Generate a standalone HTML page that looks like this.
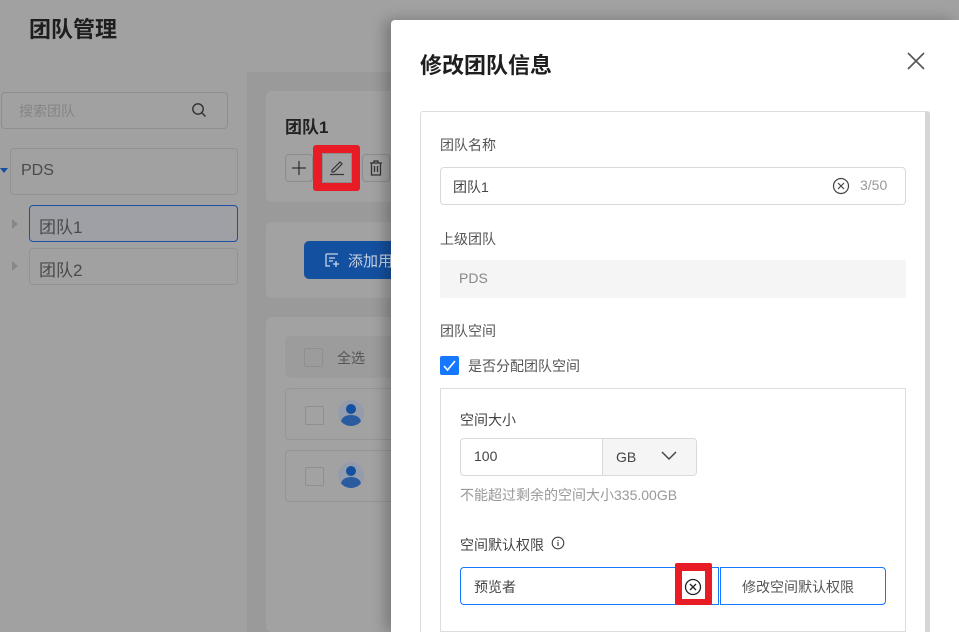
<!DOCTYPE html>
<html><head><meta charset="utf-8"><style>
*{margin:0;padding:0;box-sizing:border-box}
html,body{width:959px;height:632px;overflow:hidden}
body{position:relative;background:#a1a1a1;font-family:"Liberation Sans","Noto Sans CJK SC",sans-serif;color:#333}
.a{position:absolute}
.bx{position:absolute;border:1px solid #8f8f8f;border-radius:4px}
.t{position:absolute;font-size:14px;color:#4a4a4a;white-space:nowrap}
</style></head><body>
<div class="t" style="left:29px;top:12px;font-size:22px;font-weight:bold;color:#1e1e1e">团队管理</div>
<div class="bx" style="left:1px;top:92px;width:227px;height:37px;border-color:#8e8e8e"></div>
<div class="t" style="left:19px;top:101px;color:#858585">搜索团队</div>
<svg class="a" style="left:191px;top:102px" width="16" height="16" viewBox="0 0 16 16"><circle cx="7" cy="7" r="5.2" fill="none" stroke="#333" stroke-width="1.4"/><path d="M11 11l3.5 3.5" stroke="#333" stroke-width="1.4"/></svg>
<div class="a" style="left:0;top:168px;width:0;height:0;border-left:4px solid transparent;border-right:4px solid transparent;border-top:5px solid #1450a0"></div>
<div class="bx" style="left:10px;top:148px;width:228px;height:47px;border-color:#939393"></div>
<div class="t" style="left:21px;top:162px;font-size:16px">PDS</div>
<div class="bx" style="left:29px;top:205px;width:209px;height:37px;border-color:#2050a0;background:#9ea0a6"></div>
<div class="t" style="left:39px;top:213px;font-size:17px">团队1</div>
<div class="bx" style="left:29px;top:248px;width:209px;height:37px;border-color:#939393"></div>
<div class="t" style="left:39px;top:256px;font-size:17px">团队2</div>
<div class="a" style="left:12px;top:219px;border-top:5px solid transparent;border-bottom:5px solid transparent;border-left:6px solid #888"></div>
<div class="a" style="left:12px;top:261px;border-top:5px solid transparent;border-bottom:5px solid transparent;border-left:6px solid #888"></div>
<div class="a" style="left:247px;top:72px;width:150px;height:560px;background:#9a9a9a"></div>
<div class="a" style="left:266px;top:91px;width:130px;height:111px;background:#a2a2a2;border-radius:6px"></div>
<div class="t" style="left:285px;top:113px;font-size:17px;font-weight:bold;color:#222">团队1</div>
<div class="bx" style="left:285px;top:154px;width:28px;height:28px;border-color:#8c8c8c"></div>
<svg class="a" style="left:291px;top:160px" width="16" height="16" viewBox="0 0 16 16"><path d="M8 1v14M1 8h14" stroke="#333" stroke-width="1.3"/></svg>
<div class="a" style="left:313px;top:145px;width:47px;height:46px;background:#e81c24;border-radius:3px"></div>
<div class="a" style="left:322px;top:153px;width:30px;height:30px;background:#a2a2a2;border:1px solid #8c8c8c"></div>
<svg class="a" style="left:328px;top:158px" width="18" height="18" viewBox="0 0 18 18"><path d="M4 12l8-8 2 2-8 8H4z" fill="none" stroke="#333" stroke-width="1.2"/><path d="M2 16.5h14" stroke="#333" stroke-width="1.2"/></svg>
<div class="bx" style="left:362px;top:154px;width:28px;height:28px;border-color:#8c8c8c"></div>
<svg class="a" style="left:367px;top:158px" width="18" height="20" viewBox="0 0 18 20"><path d="M3 5h12M7 5V3h4v2M4.5 5v12h9V5M7.5 8v6M10.5 8v6" fill="none" stroke="#333" stroke-width="1.3"/></svg>
<div class="a" style="left:266px;top:222px;width:130px;height:76px;background:#a2a2a2;border-radius:6px"></div>
<div class="a" style="left:304px;top:241px;width:92px;height:38px;background:#1450a0;border-radius:5px 0 0 5px"></div>
<svg class="a" style="left:325px;top:252px" width="16" height="16" viewBox="0 0 16 16"><path d="M1 2h12M1 2v12h4M4 6h6M4 9h4M1 14h4M11 9v6M8 12h6" fill="none" stroke="#c8d3e4" stroke-width="1.3"/></svg>
<div class="t" style="left:348px;top:250px;color:#c8d3e4;font-size:15px">添加用</div>
<div class="a" style="left:266px;top:317px;width:130px;height:315px;background:#a2a2a2;border-radius:6px"></div>
<div class="a" style="left:285px;top:336px;width:111px;height:42px;background:#9c9c9c;border-radius:5px"></div>
<div class="bx" style="left:304px;top:348px;width:19px;height:19px;border-radius:2px"></div>
<div class="t" style="left:337px;top:348px;color:#555">全选</div>
<div class="bx" style="left:285px;top:388px;width:111px;height:52px;border-color:#959595"></div>
<div class="bx" style="left:305px;top:406px;width:19px;height:19px;border-radius:2px"></div>
<div class="a" style="left:338px;top:400px;width:26px;height:26px;border-radius:50%;background:#959cab;overflow:hidden"><div class="a" style="left:8px;top:4px;width:10px;height:10px;border-radius:50%;background:#1450a0"></div><div class="a" style="left:3px;top:15px;width:20px;height:14px;border-radius:50% 50% 0 0;background:#2a5aa0"></div></div>
<div class="bx" style="left:285px;top:450px;width:111px;height:52px;border-color:#959595"></div>
<div class="bx" style="left:305px;top:467px;width:19px;height:19px;border-radius:2px"></div>
<div class="a" style="left:338px;top:462px;width:26px;height:26px;border-radius:50%;background:#959cab;overflow:hidden"><div class="a" style="left:8px;top:4px;width:10px;height:10px;border-radius:50%;background:#1450a0"></div><div class="a" style="left:3px;top:15px;width:20px;height:14px;border-radius:50% 50% 0 0;background:#2a5aa0"></div></div>

<div class="a" style="left:391px;top:20px;width:568px;height:612px;background:#fff;border-radius:4px 0 0 0;box-shadow:-6px 0 14px rgba(0,0,0,.25)"></div>
<div class="t" style="left:420px;top:48px;font-size:22px;font-weight:bold;color:#1e1e1e">修改团队信息</div>
<svg class="a" style="left:907px;top:52px" width="18" height="18" viewBox="0 0 18 18"><path d="M1 1l16 16M17 1L1 17" stroke="#555" stroke-width="1.6"/></svg>
<div class="a" style="left:420px;top:111px;width:510px;height:530px;border:1px solid #ddd;border-right:5px solid #d6d6d6;border-radius:3px"></div>
<div class="t" style="left:440px;top:135px;color:#555">团队名称</div>
<div class="a" style="left:440px;top:167px;width:466px;height:38px;border:1px solid #d9d9d9;border-radius:4px"></div>
<div class="t" style="left:453px;top:177px;color:#444">团队1</div>
<svg class="a" style="left:832px;top:177px" width="18" height="18" viewBox="0 0 18 18"><circle cx="9" cy="9" r="7.5" fill="none" stroke="#444" stroke-width="1.2"/><path d="M6 6l6 6M12 6l-6 6" stroke="#444" stroke-width="1.2"/></svg>
<div class="t" style="left:860px;top:177px;color:#999">3/50</div>
<div class="t" style="left:440px;top:229px;color:#555">上级团队</div>
<div class="a" style="left:440px;top:260px;width:466px;height:38px;background:#f5f5f5;border-radius:2px"></div>
<div class="t" style="left:459px;top:270px;color:#888">PDS</div>
<div class="t" style="left:440px;top:321px;color:#555">团队空间</div>
<div class="a" style="left:440px;top:356px;width:19px;height:19px;background:#1677ff;border-radius:2px"></div>
<svg class="a" style="left:442px;top:358px" width="15" height="15" viewBox="0 0 15 15"><path d="M2 8l3.5 4L13 3" fill="none" stroke="#fff" stroke-width="1.6"/></svg>
<div class="t" style="left:468px;top:356px;color:#555">是否分配团队空间</div>
<div class="a" style="left:440px;top:388px;width:466px;height:244px;border:1px solid #ddd"></div>
<div class="t" style="left:460px;top:410px;color:#444">空间大小</div>
<div class="a" style="left:460px;top:438px;width:237px;height:38px;border:1px solid #d9d9d9;border-radius:4px"></div>
<div class="a" style="left:602px;top:439px;width:94px;height:36px;background:#f5f5f5;border-left:1px solid #d9d9d9;border-radius:0 4px 4px 0"></div>
<div class="t" style="left:474px;top:448px;color:#444">100</div>
<div class="t" style="left:616px;top:449px;color:#444">GB</div>
<svg class="a" style="left:660px;top:450px" width="18" height="12" viewBox="0 0 18 12"><path d="M2 2l7 7 7-7" fill="none" stroke="#444" stroke-width="1.5"/></svg>
<div class="t" style="left:460px;top:485px;color:#999">不能超过剩余的空间大小335.00GB</div>
<div class="t" style="left:460px;top:535px;color:#444">空间默认权限</div>
<svg class="a" style="left:551px;top:536px" width="14" height="14" viewBox="0 0 14 14"><circle cx="7" cy="7" r="5.8" fill="none" stroke="#444" stroke-width="1.1"/><path d="M7 6v4M7 4v1" stroke="#444" stroke-width="1.2"/></svg>
<div class="a" style="left:460px;top:567px;width:259px;height:38px;border:1px solid #1677ff;border-radius:4px 0 0 4px"></div>
<div class="t" style="left:474px;top:577px;color:#444">预览者</div>
<div class="a" style="left:720px;top:567px;width:166px;height:38px;border:1px solid #1677ff;border-radius:0 4px 4px 0"></div>
<div class="t" style="left:742px;top:577px;color:#555">修改空间默认权限</div>
<div class="a" style="left:675px;top:563px;width:37px;height:42px;background:#e81c24;border-radius:2px"></div>
<div class="a" style="left:682px;top:571px;width:23px;height:28px;background:#fff"></div>
<svg class="a" style="left:684px;top:578px" width="18" height="18" viewBox="0 0 18 18"><circle cx="9" cy="9" r="7.5" fill="none" stroke="#222" stroke-width="1.3"/><path d="M6 6l6 6M12 6l-6 6" stroke="#222" stroke-width="1.3"/></svg>
</body></html>
